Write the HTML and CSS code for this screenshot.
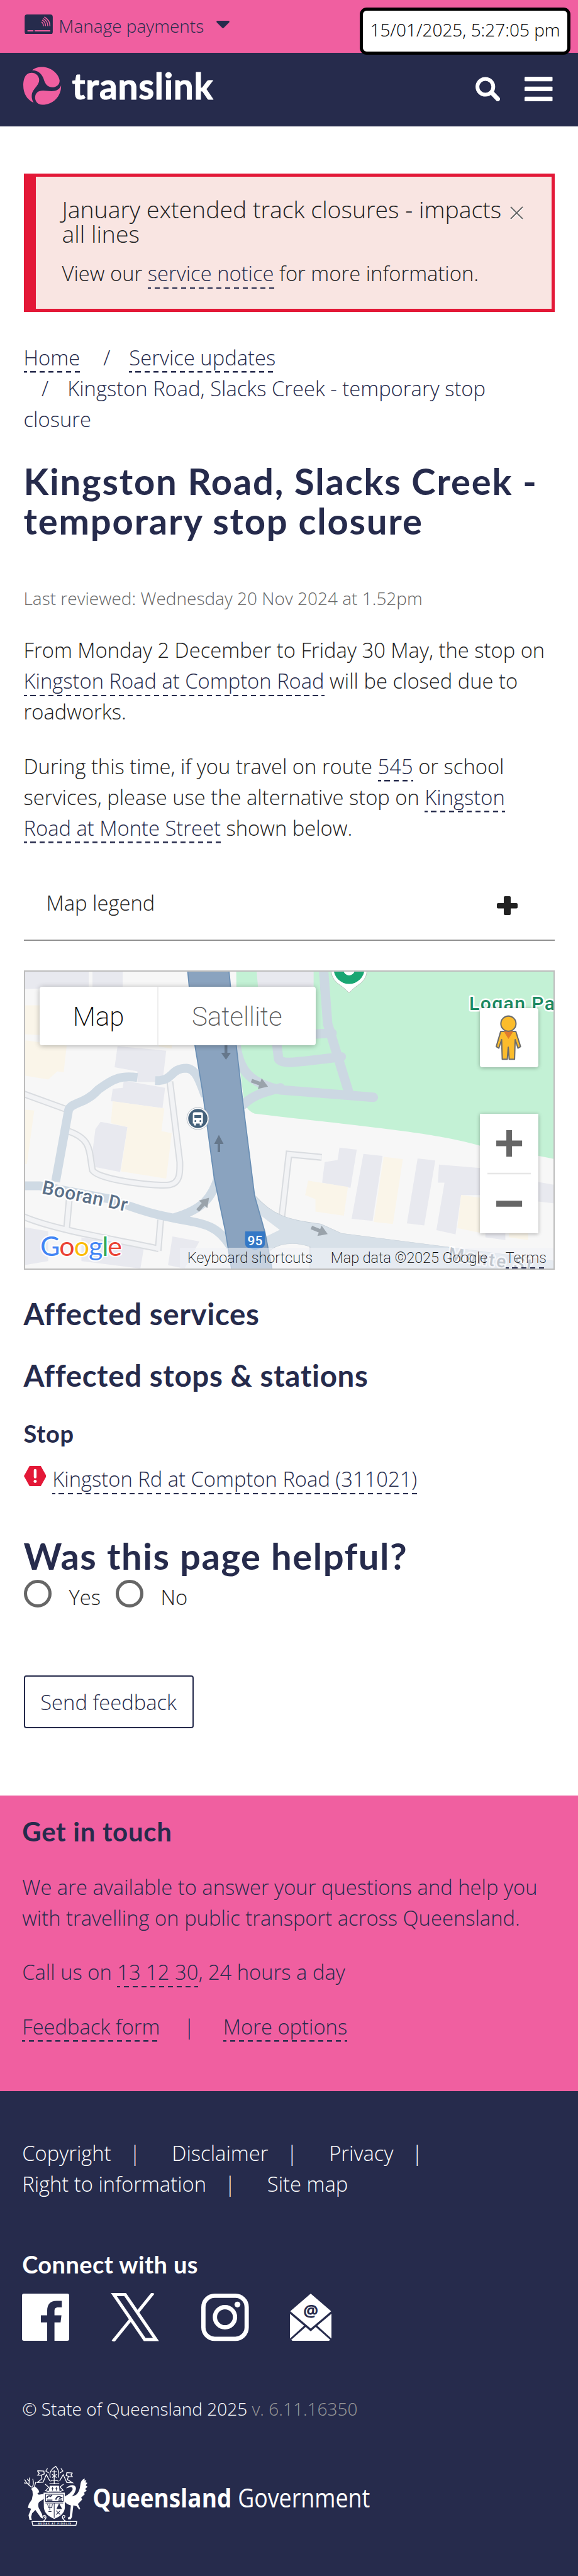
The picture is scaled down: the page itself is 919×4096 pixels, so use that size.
FILE: index.html
```html
<!DOCTYPE html>
<html lang="en">
<head>
<meta charset="utf-8">
<title>Kingston Road, Slacks Creek - temporary stop closure | Translink</title>
<link rel="stylesheet" href="styles.css">
</head>
<body>
<header>
  <div class="topbar">
    <svg class="card-icon" viewBox="0 0 45 32"><rect width="45" height="32" rx="4" fill="#262b4c"/><g fill="none" stroke="#f05fa0" stroke-width="1.5"><path d="M27 12q3 2 3 6.500"/><path d="M28 9q5.500 3 5.500 9.500"/><path d="M29.500 6.500q7.500 4 7.500 12"/><path d="M31.500 4q9 5 9 14.500"/></g><path d="M4.500 25.200h9.500v2H4.500zM16 25.200h25v2H16z" fill="#f05fa0"/></svg>
    <span class="manage">Manage payments</span>
    <svg class="caret" viewBox="0 0 21 12"><path d="M1.500 0h18q2.500 1 .5 3l-8 8q-1.500 1.500-3 0L1 3q-2-2 .5-3z" fill="#262b4c"/></svg>
    <div class="clock">15/01/2025, 5:27:05 pm</div>
  </div>
  <div class="nav">
    <svg class="brand" viewBox="20 30 1180 240">
      <g fill="#f05fa0">
        <path d="M78 56C95 40 120 36 140 36C190 36 240 75 246 118C247 145 225 160 200 160C165 158 155 130 147 105C135 75 110 55 78 56z"/>
        <path d="M24 150C24 110 35 72 75 71C100 71 121 90 121 115C121 145 95 160 80 190C72 210 75 235 87 254C45 235 24 195 24 150z"/>
        <path d="M255 147C258 215 205 267 140 267C112 266 96 245 96 222C97 195 115 180 145 180C170 180 190 187 215 182C235 178 250 165 255 147z"/>
      </g>
      <text class="brand-text" x="322" y="233" textLength="863">translink</text>
    </svg>
    <div class="nav-tools">
      <svg width="39" height="39" viewBox="0 0 39 39" fill="none" stroke="#fff"><circle cx="15.700" cy="16" r="12.600" stroke-width="6"/><path d="M26 25.500l9.500 10" stroke-width="7" stroke-linecap="round"/></svg>
      <svg width="45" height="39" viewBox="0 0 45 39" fill="#fff"><rect y="0" width="44.500" height="7.200" rx="1.500"/><rect y="15.800" width="44.500" height="7.200" rx="1.500"/><rect y="31.700" width="44.500" height="7.200" rx="1.500"/></svg>
    </div>
  </div>
</header>

<main>
  <div class="alert">
    <h4>January extended track closures - impacts<br>all lines</h4>
    <p>View our <a href="#">service notice</a> for more information.</p>
    <svg class="close" viewBox="0 0 21 22"><path d="M1 3l19 19M20 3L1 22" stroke="#fff" stroke-width="1.500"/><path d="M1 1l19 19M20 1L1 20" stroke="#666" stroke-width="1.800"/></svg>
  </div>

  <nav class="crumbs"><a href="#">Home</a><span class="sep first">/</span><a href="#">Service updates</a><br><span class="sep">/</span>Kingston Road, Slacks Creek - temporary stop<br>closure</nav>

  <h1>Kingston Road, Slacks Creek -<br>temporary stop closure</h1>
  <p class="reviewed">Last reviewed: Wednesday 20 Nov 2024 at 1.52pm</p>
  <p class="para">From Monday 2 December to Friday 30 May, the stop on<br><a href="#">Kingston Road at Compton Road</a> will be closed due to<br>roadworks.</p>
  <p class="para">During this time, if you travel on route <a href="#">545</a> or school<br>services, please use the alternative stop on <a href="#">Kingston<br>Road at Monte Street</a> shown below.</p>

  <div class="legend"><span>Map legend</span>
    <svg width="33" height="30" viewBox="0 0 33 30" fill="#222"><rect x="11" width="11" height="30" rx="2"/><rect y="11" width="33" height="8.500" rx="2"/></svg>
  </div>

  <div class="map">
    <svg class="map-art" viewBox="0 0 844 476.400">
      <g transform="scale(.5861 .3281) translate(-64 -71)">
        <rect x="64" y="71" width="1440" height="1452" fill="#f7f7f7"/>
        <path fill="#c3f1d5" d="M640 71H1504V985C1400 950 1350 935 1300 920C1180 860 1050 840 690 765Q665 750 660 690L642 435z"/>
        <g fill="#e8e9ef">
          <path d="M64 71H240V150L64 162zM250 71H332V150H250zM695 71H850V150H699zM318 438L450 460L440 612H372V560L310 540zM335 605L447 640L440 738L300 705L305 645L332 640zM272 805L345 830L325 1048L245 1020L258 840z"/>
          <path d="M920 930L967 940L950 1125L873 1100L880 1000L915 990zM985 960L1037 970L1010 1285L953 1275zM1132 982L1180 992L1150 1307L1103 1297zM1190 1012L1310 1030V1160L1250 1160L1235 1350L1183 1330L1205 1100H1187z"/>
          <path d="M64 1315L130 1335V1480L64 1500zM220 1365L390 1410L380 1516L220 1480zM467 1360L540 1385L500 1516L455 1500zM1455 1095L1504 1110V1200L1455 1190zM1316 1345H1370V1378L1316 1365z"/>
        </g>
        <path fill="#faf5e9" d="M64 240H115V385L64 380zM68 410L180 435L172 565L155 560L130 600L64 580zM305 705L445 740L437 850L465 860L450 1080L327 1045L345 830L300 812zM64 745L92 750L72 1010H64zM1040 975L1092 985L1065 1300L1013 1290zM835 1090L943 1120L932 1260L855 1240V1180L827 1160zM1250 1160L1310 1175V1345L1240 1320zM1380 1345H1432V1378L1380 1365zM430 430H465V450L430 440z"/>
        <path class="lane edge" d="M64 670L180 745M185 850C250 890 240 950 250 1040C270 1090 430 1120 460 1110C490 1100 487 1040 487 1000L460 610M762 1290L783 962L872 977M64 1265C150 1330 300 1370 430 1420M188 1160L180 1320M435 1280L428 1430"/>
        <path class="lane" d="M64 670L180 745M185 850C250 890 240 950 250 1040C270 1090 430 1120 460 1110C490 1100 487 1040 487 1000L460 610M762 1290L783 962L872 977M64 1265C150 1330 300 1370 430 1420M188 1160L180 1320M435 1280L428 1430"/>
        <path class="park-road" d="M877 71L888 330L945 660M850 380L900 375M750 430L755 500C765 530 800 515 925 490M640 440C650 560 680 620 760 650L1012 686M660 720C690 670 720 660 760 640"/>
        <path class="street" d="M150 1095L185 750C190 710 230 720 265 650C310 590 330 580 372 590M420 605C470 610 460 545 505 545C530 548 540 600 556 680M64 1115H108L300 1180C400 1250 440 1260 480 1275C560 1300 590 1310 625 1410M470 1270C550 1230 575 1170 592 1070"/>
        <path fill="#d7e0e8" stroke="#c3cdd6" stroke-width="2" d="M690 1160C740 1260 780 1280 870 1300L925 1345L1230 1415L1504 1480V1530H840V1410C800 1385 750 1390 725 1440L715 1330z"/>
        <path fill="#f7f7f7" d="M709 1262L758 1328L720 1362z"/>
        <path fill="#8aa3bf" stroke="#6a8fb5" stroke-width="3" d="M508 68H620L640 435L660 740L690 1165L718 1340L738 1526H628L610 1330L580 1075L548 650L528 435z"/>
      </g>
      <g fill="#66788c">
        <path d="M319 119h4.500v12h5.500l-7.700 11-7.700-11h5.400z"/>
        <path d="M308 289v-13h-5.500l7.500-14.500 7.500 14.500h-5.500v13z"/>
      </g>
      <g fill="#9aa3ab">
        <path transform="translate(375 180) rotate(20)" d="M-14-3H0V-9L14 0L0 9V3H-14z"/>
        <path transform="translate(285 372) rotate(-48)" d="M-13-3H0V-9L14 0L0 9V3H-13z"/>
        <path transform="translate(470 414) rotate(22)" d="M-14-3H0V-9L14 0L0 9V3H-14z"/>
      </g>
      <path d="M489-8a28 28 0 0 0 9 28c8 6 13 9 19 16 6-7 11-10 19-16a28 28 0 0 0 9-28z" fill="#fff" stroke="#b9c5bd" stroke-width="1"/>
      <circle cx="517" cy="-3" r="24.500" fill="#1aa673"/><circle cx="517" cy="-1" r="9" fill="#fff"/>
      <g transform="translate(276.600 235.500)"><circle r="17.500" fill="#fff" stroke="#b5bcc4"/><circle r="15.300" fill="#45617a"/><path d="M-8-7q0-3 3-3H5q3 0 3 3V8H6v3H3V8H-3v3H-6V8H-8z" fill="#fff"/><path d="M-5.500-5.500h11V-.5h-11z" fill="#45617a"/><circle cx="-4" cy="4" r="1.500" fill="#45617a"/><circle cx="4" cy="4" r="1.500" fill="#45617a"/></g>
      <text class="lbl park" x="708" y="63" textLength="136">Logan Pa</text>
      <text class="lbl road" transform="translate(27.500 354.500) rotate(12)" textLength="138">Booran Dr</text>
      <text class="lbl monte" transform="translate(674 460) rotate(8)" textLength="134">Monte St</text>
      <path d="M352 415h31q1 15 0 21-1 5-8 6l-7.500 3-7.500-3q-7-1-8-6-1-6 0-21z" fill="#3478c6"/>
      <text class="shield" x="367.500" y="437">95</text>
      <text class="google" x="26" y="454" textLength="130"><tspan fill="#4285f4">G</tspan><tspan fill="#ea4335">o</tspan><tspan fill="#fbbc05">o</tspan><tspan fill="#4285f4">g</tspan><tspan fill="#34a853">l</tspan><tspan fill="#ea4335">e</tspan></text>
    </svg>
    <div class="map-types"><span class="on">Map</span><span>Satellite</span></div>
    <div class="pegman"><svg viewBox="0 0 93 93"><path d="M33 37H57L64.500 61L60.500 63.500L56 50L55 81H46.500L45 62L43.500 81H35.500L34.500 50L30 63.500L26 61z" fill="#fbbc2c" stroke="#6b6b6b" stroke-width="2" stroke-linejoin="round"/><path d="M38 37H53L45.300 49z" fill="#e07b2c"/><circle cx="45.300" cy="24.600" r="12" fill="#fbbc2c" stroke="#6b6b6b" stroke-width="2"/></svg></div>
    <div class="zoomer"><svg viewBox="0 0 93 190" fill="#666"><path d="M26 42.500H42V26H51V42.500H67V51.500H51V68H42V51.500H26zM26 138H67V147.500H26z"/><path d="M12 93.500H81V96H12z" fill="#e6e6e6"/></svg></div>
    <div class="map-foot"><span>Keyboard shortcuts</span><span>Map data ©2025 Google</span><a href="#">Terms</a></div>
  </div>

  <h2>Affected services</h2>
  <h2 class="second">Affected stops &amp; stations</h2>
  <h3>Stop</h3>
  <p class="stop"><svg viewBox="0 0 36 32"><path d="M9 0H27L36 16L27 32H9L0 16z" fill="#e31837"/><path d="M18 7v10.500" stroke="#fff" stroke-width="4.400" stroke-linecap="round"/><circle cx="18" cy="24.500" r="2.500" fill="#fff"/></svg><a href="#">Kingston Rd at Compton Road (311021)</a></p>

  <h1 class="helpful">Was this page helpful?</h1>
  <div class="radios"><i></i><label>Yes</label><i></i><label>No</label></div>
  <button class="send">Send feedback</button>
</main>

<section class="touch">
  <h3>Get in touch</h3>
  <p>We are available to answer your questions and help you<br>with travelling on public transport across Queensland.</p>
  <p>Call us on <a href="#">13 12 30</a>, 24 hours a day</p>
  <p><a href="#">Feedback form</a><span class="bar">|</span><a href="#">More options</a></p>
</section>

<footer>
  <p class="links">Copyright<span class="bar">|</span>Disclaimer<span class="bar">|</span>Privacy<span class="bar">|</span><br>Right to information<span class="bar">|</span>Site map</p>
  <h3>Connect with us</h3>
  <div class="social">
    <svg width="75" height="77" viewBox="0 -1 75 77"><path fill="#fff" fill-rule="evenodd" d="M3 0H72Q75 0 75 3V72Q75 75 72 75H51.600V45.700H61.300L62.700 34.600H51.600V28C51.600 24 53 21.800 58 21.800H63.300V11.400H55C45 11.400 40 17 40 27V34.600H30V45.700H40V75H3Q0 75 0 72V3Q0 0 3 0z"/></svg>
    <svg width="78" height="77" viewBox="0 0 78 77" fill="none" stroke="#fff" stroke-width="5"><path d="M5 2.500H23L72 74H54z"/><path d="M67.500 0L42 31.500M3.500 77L32 42"/></svg>
    <svg width="76" height="77" viewBox="0 -1 76 77" fill="none" stroke="#fff" stroke-width="6.800"><rect x="3.400" y="3.400" width="68.800" height="68.400" rx="18"/><circle cx="37.700" cy="37.500" r="16"/><circle cx="57.500" cy="17.300" r="4.600" fill="#fff" stroke="none"/></svg>
    <svg width="66" height="77" viewBox="0 -1 66 77" fill="#fff"><path d="M33 0L65.500 28L33 55.500L.5 28zM0 32L22.500 51L0 71.500zM66 32L43.500 51L66 71.500zM25 53L33 60L41 53L64 73.500L62 75H4L2 73.500z"/><text class="at" x="33" y="37">@</text></svg>
  </div>
  <p class="copy">© State of Queensland 2025 <span>v. 6.11.16350</span></p>
  <svg class="crest" viewBox="20 25 2140 375">
    <g fill="#fff">
      <path d="M72 168L92 155Q105 158 118 178L122 190L110 195L118 205L150 200V230L120 250Q112 265 118 285L138 322L146 352L132 345L112 318L98 298L78 318L72 340L76 360H62L56 330L72 290L52 285L58 262L76 235L82 205L80 182z"/>
      <path d="M372 150Q376 112 400 106L398 118L410 116L404 130L416 132L406 148L417 156L402 170L412 180L395 192L400 202L378 222L384 235L358 262L372 290L366 296L350 275L330 270L322 340L314 356H298L296 345L308 338L315 270Q290 265 276 245L278 215Q310 200 325 175Q328 160 315 158L285 165Q300 148 325 146Q352 150 345 175Q335 205 320 215Q365 210 372 150z"/>
      <path d="M148 192H278V285Q275 330 213 353Q155 330 150 285z"/>
      <path d="M186 150H242L246 186H178z"/>
    </g>
    <g fill="none" stroke="#fff" stroke-width="5">
      <path d="M80 160Q55 150 32 112M45 135L28 132M58 148L62 100M60 122L48 108M92 156L100 128M80 155Q90 140 82 108"/>
      <path d="M190 100Q175 60 225 30M238 100Q250 60 222 32M180 72L162 60L172 44M248 72L266 60L254 44M110 58L150 60L152 78L135 84L138 108L110 130L145 128L165 82L186 120M325 72L290 70L286 88L300 92L294 112L325 132L290 130L268 82L246 120M110 58L122 75L112 85L135 86M325 72L315 84L324 95L300 95"/>
      <path d="M196 65H230M213 55V140M200 80L228 100M228 80L200 100M190 122Q213 110 240 122M184 138H244M158 140L180 160L160 180L182 186M270 140L248 158L268 178L246 186M192 155V185M238 155V185"/>
      <path d="M77 369H351L346 392H82zM145 368Q175 345 155 330Q140 332 158 348M285 368Q250 345 270 330Q288 332 270 350"/>
    </g>
    <g fill="none" stroke="#262b4c" stroke-width="4">
      <path d="M160 202H268V246H160zM213 256V346M160 256H268M203 158V180M226 158V180M196 168H210M219 168H233"/>
      <path d="M172 262L180 285H198L202 262M186 262V300M178 308H196M225 302L250 326M250 302L225 326"/>
      <path d="M168 225Q178 205 190 215L200 205M170 238H202M222 235Q232 205 258 222L244 228M238 238H262" stroke-width="7"/>
      <path d="M243 262L230 290H258z" fill="#262b4c"/>
    </g>
    <text class="motto" x="114" y="386" textLength="202">AUDAX AT FIDELIS</text>
    <text class="gov bold" x="448" y="284" textLength="850" lengthAdjust="spacingAndGlyphs">Queensland</text>
    <text class="gov" x="1336" y="284" textLength="808" lengthAdjust="spacingAndGlyphs">Government</text>
  </svg>
</footer>
</body>
</html>
```
FILE: styles.css
```css
* { box-sizing: border-box; }
body {
  margin: 0;
  width: 919px;
  height: 4096px;
  overflow: hidden;
  background: #fff;
  color: #222;
  font: 300 32.74px/49.1px "Open Sans", sans-serif;
  white-space: nowrap;
}
h1, h2, h3, h4, p { margin: 0; }
svg { display: block; flex: none; }
a {
  color: #262b4c;
  text-decoration: none;
  padding-bottom: 2px;
  background: repeating-linear-gradient(90deg, #262b4c 0 4.7px, transparent 4.7px 10.5px, #262b4c 10.5px 14.03px) left bottom / 100% 2.5px no-repeat;
  -webkit-box-decoration-break: clone;
  box-decoration-break: clone;
}
h1, h2, h3 { font-family: Lato, sans-serif; font-weight: 700; color: #262b4c; }

.topbar {
  position: relative;
  height: 84.2px;
  background: #f05fa0;
  color: #262b4c;
  display: flex;
  align-items: flex-start;
  padding-left: 38.7px;
  font-size: 28px;
  line-height: 42px;
}
.card-icon { width: 45.1px; height: 31.8px; margin-top: 22.6px; }
.manage { margin: 20px 0 0 9.5px; width: 251px; }
.caret { width: 21px; height: 12px; margin-top: 32.7px; }
.clock {
  position: absolute;
  left: 572px;
  top: 11.7px;
  width: 335px;
  height: 75px;
  border: 5px solid #000;
  border-radius: 11px;
  background: #fff;
  color: #000;
  text-align: center;
  line-height: 61px;
}
.nav {
  height: 116.6px;
  background: #262b4c;
  display: flex;
  justify-content: space-between;
  padding: 21px 40px 0 36.4px;
}
.brand { width: 306.8px; height: 62.4px; }
.brand-text { font: 700 218px Lato, sans-serif; fill: #fff; stroke: #fff; stroke-width: 4px; stroke-linejoin: round; }
.nav-tools { display: flex; gap: 39px; padding-top: 17px; }

main { padding: 75px 37.5px 0; height: 2654.4px; }
.alert {
  position: relative;
  height: 219.9px;
  border: 5px solid #e31837;
  border-left-width: 19px;
  background: #f9e5e2;
  padding: 32px 0 0 42px;
}
.alert h4 { font-size: 37.4px; line-height: 39.7px; font-weight: 300; margin-bottom: 18px; }
.close { position: absolute; left: 754px; top: 47.5px; width: 21px; height: 22px; }

.crumbs { margin-top: 47.9px; color: #262b4c; }
.sep { padding: 0 30px 0 28.5px; }
.sep.first { padding-left: 37px; }

h1 { font-size: 58px; line-height: 63.3px; letter-spacing: 1.8px; margin-top: 41.8px; }
.reviewed { font-size: 28px; line-height: 42px; color: #666; margin-top: 70.8px; }
.para { margin-top: 36.9px; }
.para + .para { margin-top: 37.6px; }

.legend {
  display: flex;
  justify-content: space-between;
  height: 85.4px;
  margin-top: 69.9px;
  padding: 0 58.5px 0 36px;
  border-bottom: 2.4px solid #8f8f8f;
}
.legend svg { margin-top: 14.5px; }

.map { position: relative; height: 476.4px; margin-top: 46.7px; overflow: hidden; }
.map::after { content: ""; position: absolute; inset: 0; border: 2.4px solid #bdbdbd; pointer-events: none; }
.map-art { width: 844px; height: 476.4px; }
.lane, .park-road, .street { fill: none; vector-effect: non-scaling-stroke; }
.lane { stroke: #f2f3f5; stroke-width: 7px; }
.lane.edge { stroke: #d9dce0; stroke-width: 11px; }
.park-road { stroke: #ccd8e2; stroke-width: 15px; stroke-linecap: round; }
.street { stroke: #cfdae4; stroke-width: 14px; }
.lbl { font: 500 30px Roboto, sans-serif; paint-order: stroke; stroke: #fff; stroke-width: 5px; stroke-linejoin: round; }
.park { fill: #1c8a62; }
.road { fill: #5b7088; }
.monte { fill: #76838f; font-size: 28px; }
.shield { font: 500 21px Roboto, sans-serif; fill: #fff; text-anchor: middle; }
.google { font: 400 43px Lato, sans-serif; paint-order: stroke; stroke: #fff; stroke-width: 4px; stroke-linejoin: round; }
.google tspan { paint-order: stroke; }
.map-types {
  position: absolute;
  left: 25.8px;
  top: 26px;
  height: 93.4px;
  display: flex;
  background: #fff;
  border-radius: 4px;
  box-shadow: 0 1px 8px rgba(0, 0, 0, .3);
  font: 200 42px/95px Roboto, sans-serif;
  color: #565656;
}
.map-types span { width: 249.7px; text-align: center; }
.map-types .on { width: 188.7px; color: #000; border-right: 2px solid #eee; }
.pegman, .zoomer { position: absolute; left: 725px; width: 93.2px; background: #fff; box-shadow: 0 1px 6px rgba(0, 0, 0, .3); }
.pegman { top: 60px; height: 93.5px; border-radius: 4px; }
.zoomer { top: 228.4px; height: 189.8px; }
.map-foot {
  position: absolute;
  left: 248.5px;
  right: 0;
  bottom: 0;
  height: 35px;
  padding-left: 12px;
  display: flex;
  gap: 28.5px;
  background: rgba(240, 242, 246, .6);
  color: #000;
  font: 200 23.4px/33px Roboto, sans-serif;
}
.map-foot a { color: #222; height: 33px; padding: 0; }

h2 { font-size: 47.5px; line-height: 51.5px; letter-spacing: .6px; margin-top: 43.6px; }
h2.second { margin-top: 46.8px; }
h3 { font-size: 38px; line-height: 41px; letter-spacing: .7px; margin-top: 46.6px; }
.stop { display: flex; align-items: flex-start; margin-top: 27.1px; }
.stop svg { width: 35.8px; height: 32px; margin: 3.4px 10px 0 0; }
.stop a { line-height: 44.5px; margin-top: 2.4px; height: 46.2px; padding: 0; }

.helpful { margin-top: 66.4px; letter-spacing: 1.5px; }
.radios { display: flex; margin-top: 5.8px; }
.radios i { width: 44.5px; height: 44.5px; border: 5px solid #666; border-radius: 50%; }
.radios label { width: 101.5px; padding-left: 27.5px; margin-top: 3.4px; }
.send {
  display: block;
  width: 270.2px;
  height: 84.1px;
  margin-top: 99.5px;
  padding: 1px 0 0;
  border: 2.4px solid #262b4c;
  border-radius: 4px;
  background: #fff;
  color: #262b4c;
  font: inherit;
}

.touch { height: 470.3px; background: #f05fa0; color: #262b4c; padding: 34.2px 35.2px 0; }
.touch h3 { font-size: 42px; line-height: 46px; margin: 0 0 40.2px; }
.touch p { margin-bottom: 37.5px; }
.touch .bar { padding: 0 45px 0 37.5px; }

footer { height: 770.5px; background: #262b4c; color: #fff; padding: 73.6px 35.2px 0; }
.bar { padding: 0 50px 0 29px; }
footer h3 { color: #fff; letter-spacing: .4px; margin-top: 82.5px; }
.social { display: flex; gap: 65.7px; margin-top: 24.8px; }
.at { font: 700 27px "Open Sans", sans-serif; fill: #262b4c; text-anchor: middle; }
.copy { font-size: 28px; line-height: 42px; margin-top: 86.3px; }
.copy span { color: #999; }
.crest { width: 556.4px; height: 97.5px; margin: 68.7px 0 0 1.2px; }
.motto { font: 700 15px "Liberation Sans", sans-serif; fill: #fff; }
.gov { font: 400 158px "Open Sans", sans-serif; fill: #fff; }
.gov.bold { font-weight: 700; }
```
